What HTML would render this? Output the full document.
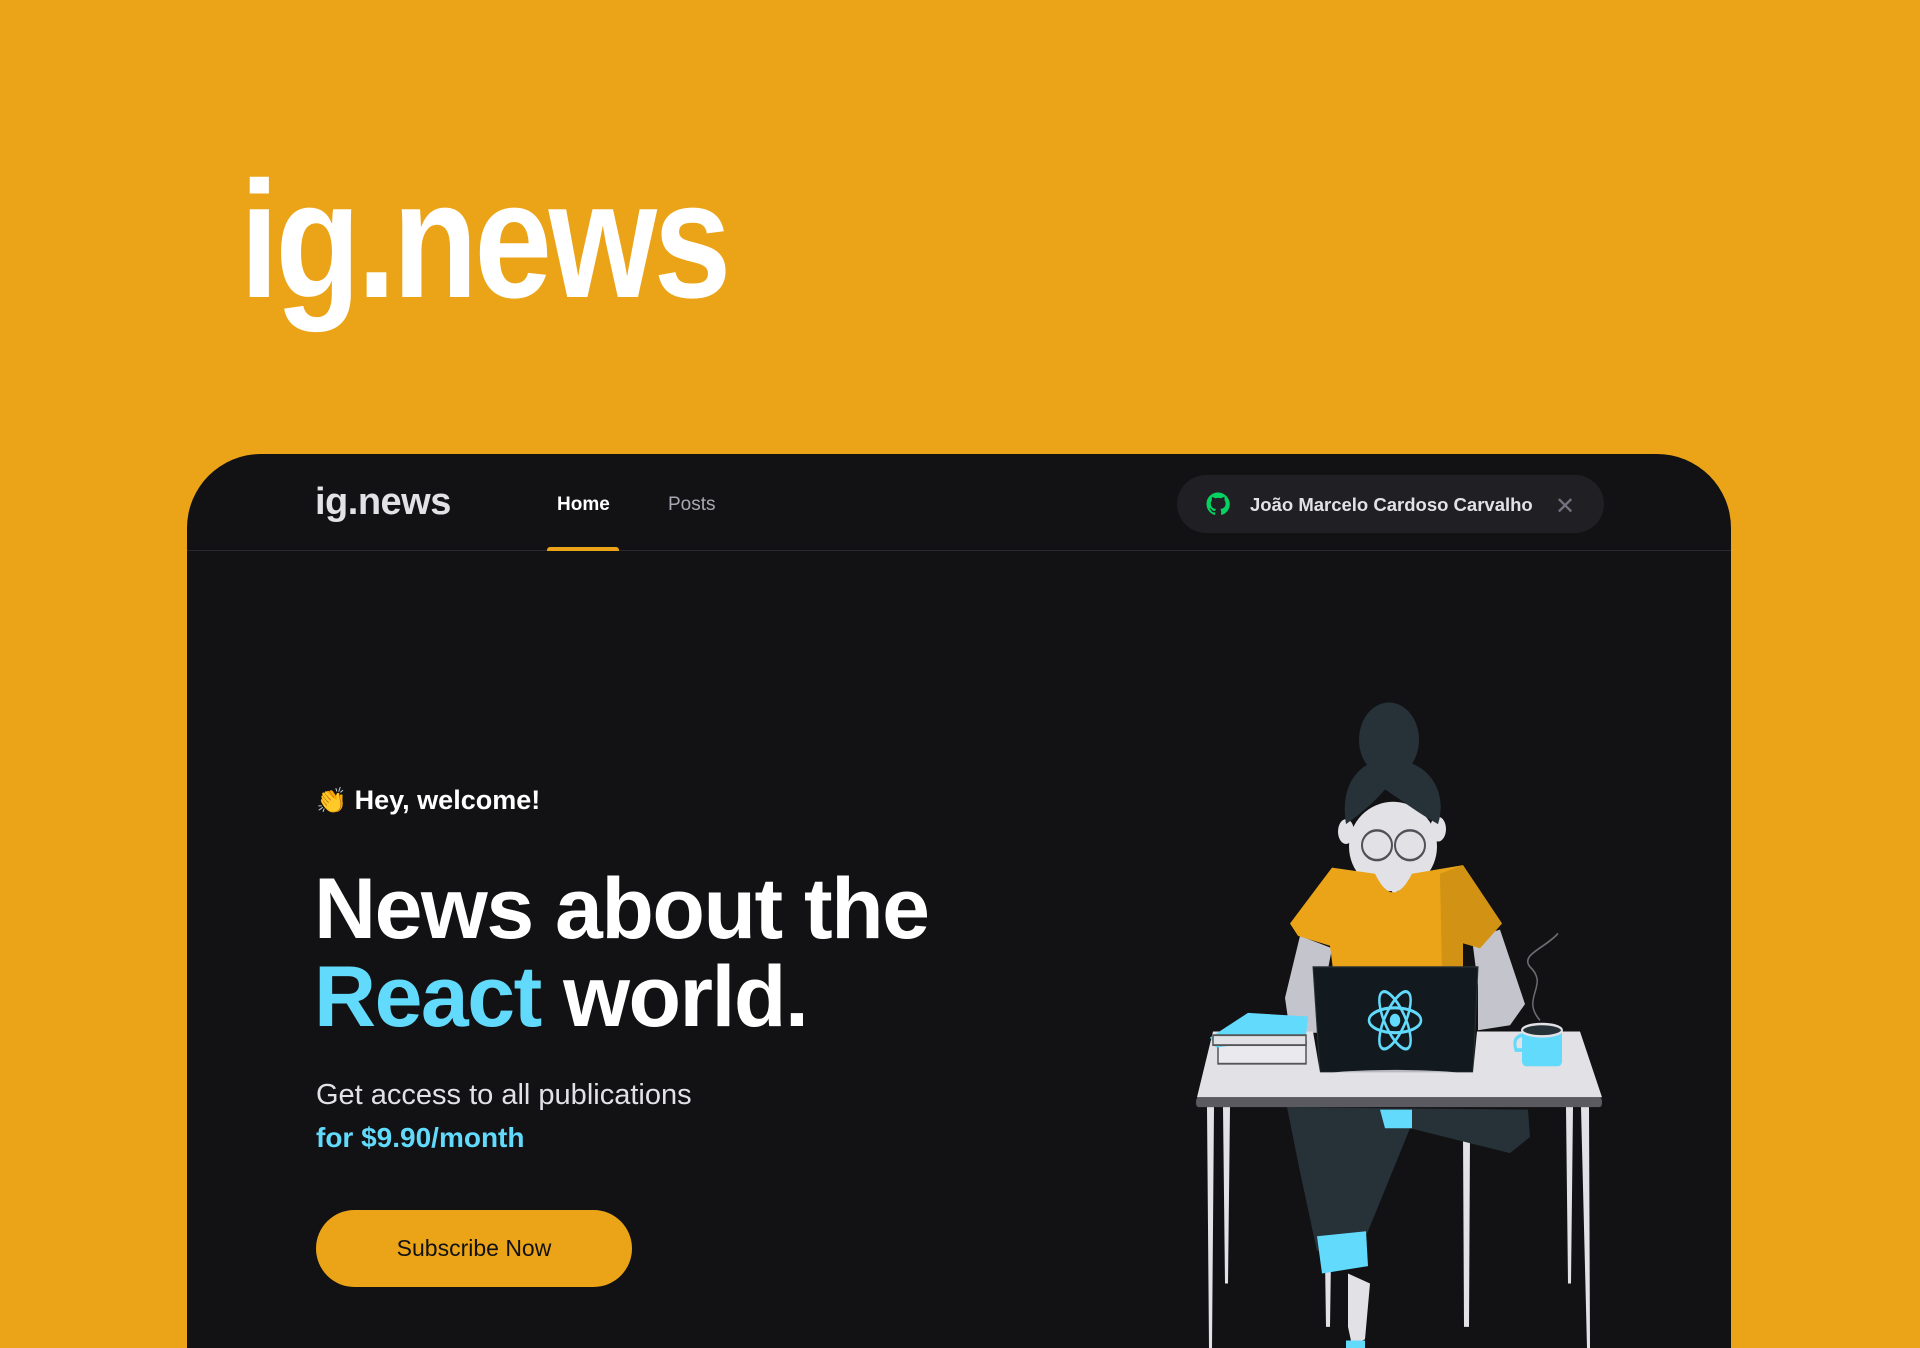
<!DOCTYPE html>
<html><head><meta charset="utf-8">
<style>
*{margin:0;padding:0;box-sizing:border-box}
html,body{width:1920px;height:1348px;overflow:hidden;background:#eba417;font-family:"Liberation Sans",sans-serif}
.big{position:absolute;left:240px;top:158px;font-size:166px;font-weight:700;color:#fff;letter-spacing:-4px;line-height:1;transform:scaleX(0.84);transform-origin:left}
.card{position:absolute;left:187px;top:454px;width:1544px;height:894px;background:#121214;border-radius:74px 74px 0 0;overflow:hidden}
.hdr{position:absolute;left:0;top:0;width:100%;height:97px;border-bottom:1px solid #29292e}
.logo{position:absolute;left:128px;top:27px;font-size:38px;font-weight:700;color:#e1e1e6;letter-spacing:-0.5px}
.nav{position:absolute;top:40px;font-size:19px}
.home{left:370px;color:#fff;font-weight:700}
.posts{left:481px;color:#a8a8b3}
.ul{position:absolute;left:360px;top:93px;width:72px;height:4px;background:#eba417;border-radius:3px 3px 0 0}
.user{position:absolute;left:990px;top:21px;width:427px;height:58px;border-radius:29px;background:#202024;color:#e1e1e6;font-weight:700;font-size:18.5px}
.user .nm{position:absolute;left:73px;top:19px;white-space:nowrap}
.user .x{position:absolute;left:378px;top:17px;color:#737380;font-size:24px;font-weight:400}
.hey{position:absolute;left:129px;top:331px;font-size:27px;font-weight:700;color:#fff}
h1{position:absolute;left:127px;top:411px;font-size:86px;line-height:88px;font-weight:700;color:#fff;letter-spacing:-1.5px}
h1 span{color:#61dafb}
.p1{position:absolute;left:129px;top:625px;font-size:29px;color:#e1e1e6}
.p2{position:absolute;left:129px;top:668px;font-size:28px;font-weight:700;color:#61dafb}
.btn{position:absolute;left:129px;top:756px;width:316px;height:77px;border-radius:39px;background:#eba417;color:#121214;font-size:23px;text-align:center;line-height:77px}
svg.il{position:absolute;left:993px;top:246px}
</style></head><body>
<div class="big">ig.news</div>
<div class="card">
 <div class="hdr">
  <div class="logo">ig.news</div>
  <div class="nav home">Home</div>
  <div class="nav posts">Posts</div>
  <div class="ul"></div>
  <div class="user">
   <svg style="position:absolute;left:29px;top:17px" width="24" height="24" viewBox="0 0 24 24"><path fill="#04d361" d="M12 .5C5.6.5.5 5.6.5 12c0 5.1 3.3 9.4 7.9 10.9.6.1.8-.2.8-.6v-2c-3.2.7-3.900-1.5-3.900-1.5-.5-1.3-1.3-1.7-1.3-1.7-1-.7.1-.7.1-.7 1.2.1 1.8 1.2 1.8 1.2 1 1.8 2.8 1.3 3.5 1 .1-.8.4-1.3.7-1.6-2.6-.3-5.3-1.3-5.3-5.700 0-1.3.5-2.3 1.2-3.1-.1-.3-.5-1.5.1-3.1 0 0 1-.3 3.2 1.2a11 11 0 0 1 5.8 0C17.3 4.7 18.3 5 18.3 5c.6 1.6.2 2.8.1 3.1.7.8 1.2 1.9 1.2 3.1 0 4.4-2.7 5.4-5.3 5.7.4.4.8 1.1.8 2.2v3.2c0 .3.2.7.8.6 4.6-1.5 7.900-5.8 7.900-10.900C23.5 5.6 18.4.5 12 .5z"/></svg>
   <div class="nm">João Marcelo Cardoso Carvalho</div>
   <div class="x">✕</div>
  </div>
 </div>
 <div class="hey"><span style="font-size:25px">👏</span> Hey, welcome!</div>
 <h1>News about the<br><span>React</span> world.</h1>
 <div class="p1">Get access to all publications</div>
 <div class="p2">for $9.90/month</div>
 <div class="btn">Subscribe Now</div>
 <svg class="il" width="440" height="648" viewBox="0 0 440 522" preserveAspectRatio="none">
  <path d="M283 350 L290 350 L289 505 L284 505Z" fill="#e1e1e6"/>
  <path d="M145 450 L151 450 L150 505 L146 505Z" fill="#e1e1e6"/>
  <path d="M120 190 L152 200 L140 250 L148 268 L110 268 L105 240Z" fill="#c4c4cc"/>
  <path d="M292 192 L320 185 L345 245 L330 262 L298 266 L298 230Z" fill="#c4c4cc"/>
  <path d="M107 328 L348 330 L350 352 L330 365 L230 345 L187 430 L137 444 L120 380 Z" fill="#263238"/>
  <path d="M137 432 L186 428 L188 456 L142 462Z" fill="#61dafb"/>
  <path d="M168 462 L190 470 L185 515 L172 520 L168 505Z" fill="#e1e1e6"/>
  <path d="M166 516 L185 516 L185 522 L166 522Z" fill="#61dafb"/>
  <path d="M200 330 L232 330 L232 345 L205 345Z" fill="#61dafb"/>
  <circle cx="209" cy="32" r="30" fill="#263238"/>
  <ellipse cx="213" cy="118" rx="44" ry="36" fill="#e1e1e6"/>
  <ellipse cx="166" cy="106" rx="8" ry="10" fill="#e1e1e6"/>
  <ellipse cx="258" cy="104" rx="8" ry="10" fill="#e1e1e6"/>
  <path d="M166 100 C158 60 190 45 215 48 C250 50 268 75 258 100 C240 92 220 80 205 72 C195 82 180 92 166 100Z" fill="#263238"/>
  <ellipse cx="197" cy="117" rx="15" ry="12" fill="none" stroke="#505058" stroke-width="2"/>
  <ellipse cx="230" cy="117" rx="15" ry="12" fill="none" stroke="#505058" stroke-width="2"/>
  <path d="M200 140 L226 140 L215 158Z" fill="#e1e1e6"/>
  <path d="M110 180 L152 135 L195 140 Q213 170 232 140 L283 133 L322 180 L300 200 L283 196 L283 217 L153 217 L150 198 L118 190Z" fill="#eba417"/>
  <path d="M260 140 L283 133 L322 180 L300 200 L283 196 L283 217 L262 217Z" fill="#c88c14" opacity=".7"/>
  <path d="M133 215 L298 215 L293 300 L140 300Z" fill="#121a1f" stroke="#2a3236"/>
  <ellipse cx="215" cy="304" rx="82" ry="6" fill="#b8b8bf"/>
  <g fill="none" stroke="#61dafb" stroke-width="2.5" transform="translate(215,258)">
   <ellipse rx="26" ry="10"/><ellipse rx="26" ry="10" transform="rotate(60)"/><ellipse rx="26" ry="10" transform="rotate(-60)"/>
   <circle r="4" fill="#61dafb"/>
  </g>
  <path d="M33 267 L133 267 L140 300 L293 300 L297 267 L400 267 L422 320 L17 320Z" fill="#e1e1e6"/>
  <rect x="16" y="320" width="406" height="8" rx="3" fill="#5a5a60"/>
  <path d="M27 328 L34 328 L32 522 L29 522Z" fill="#e1e1e6"/>
  <path d="M43 328 L50 328 L48 470 L45 470Z" fill="#e1e1e6"/>
  <path d="M386 328 L393 328 L391 470 L388 470Z" fill="#e1e1e6"/>
  <path d="M401 328 L409 328 L410 522 L407 522Z" fill="#e1e1e6"/>
  <rect x="38" y="275" width="88" height="18" fill="#e9e9ee" stroke="#555" stroke-width="1.5"/>
  <path d="M30 272 L68 252 L128 255 L126 270 L36 280Z" fill="#61dafb"/>
  <rect x="33" y="270" width="93" height="8" fill="#e1e1e6" stroke="#555" stroke-width="1.5"/>
  <rect x="342" y="265" width="40" height="30" rx="4" fill="#61dafb"/>
  <ellipse cx="362" cy="266" rx="20" ry="5" fill="#263238" stroke="#e1e1e6" stroke-width="2"/>
  <path d="M342 270 Q332 272 336 282 L342 282" fill="none" stroke="#61dafb" stroke-width="3"/>
  <path d="M360 258 C340 240 370 230 350 215 C340 205 365 200 378 188" fill="none" stroke="#6b6b70" stroke-width="1.5"/>
 </svg>
</div>
</body></html>
